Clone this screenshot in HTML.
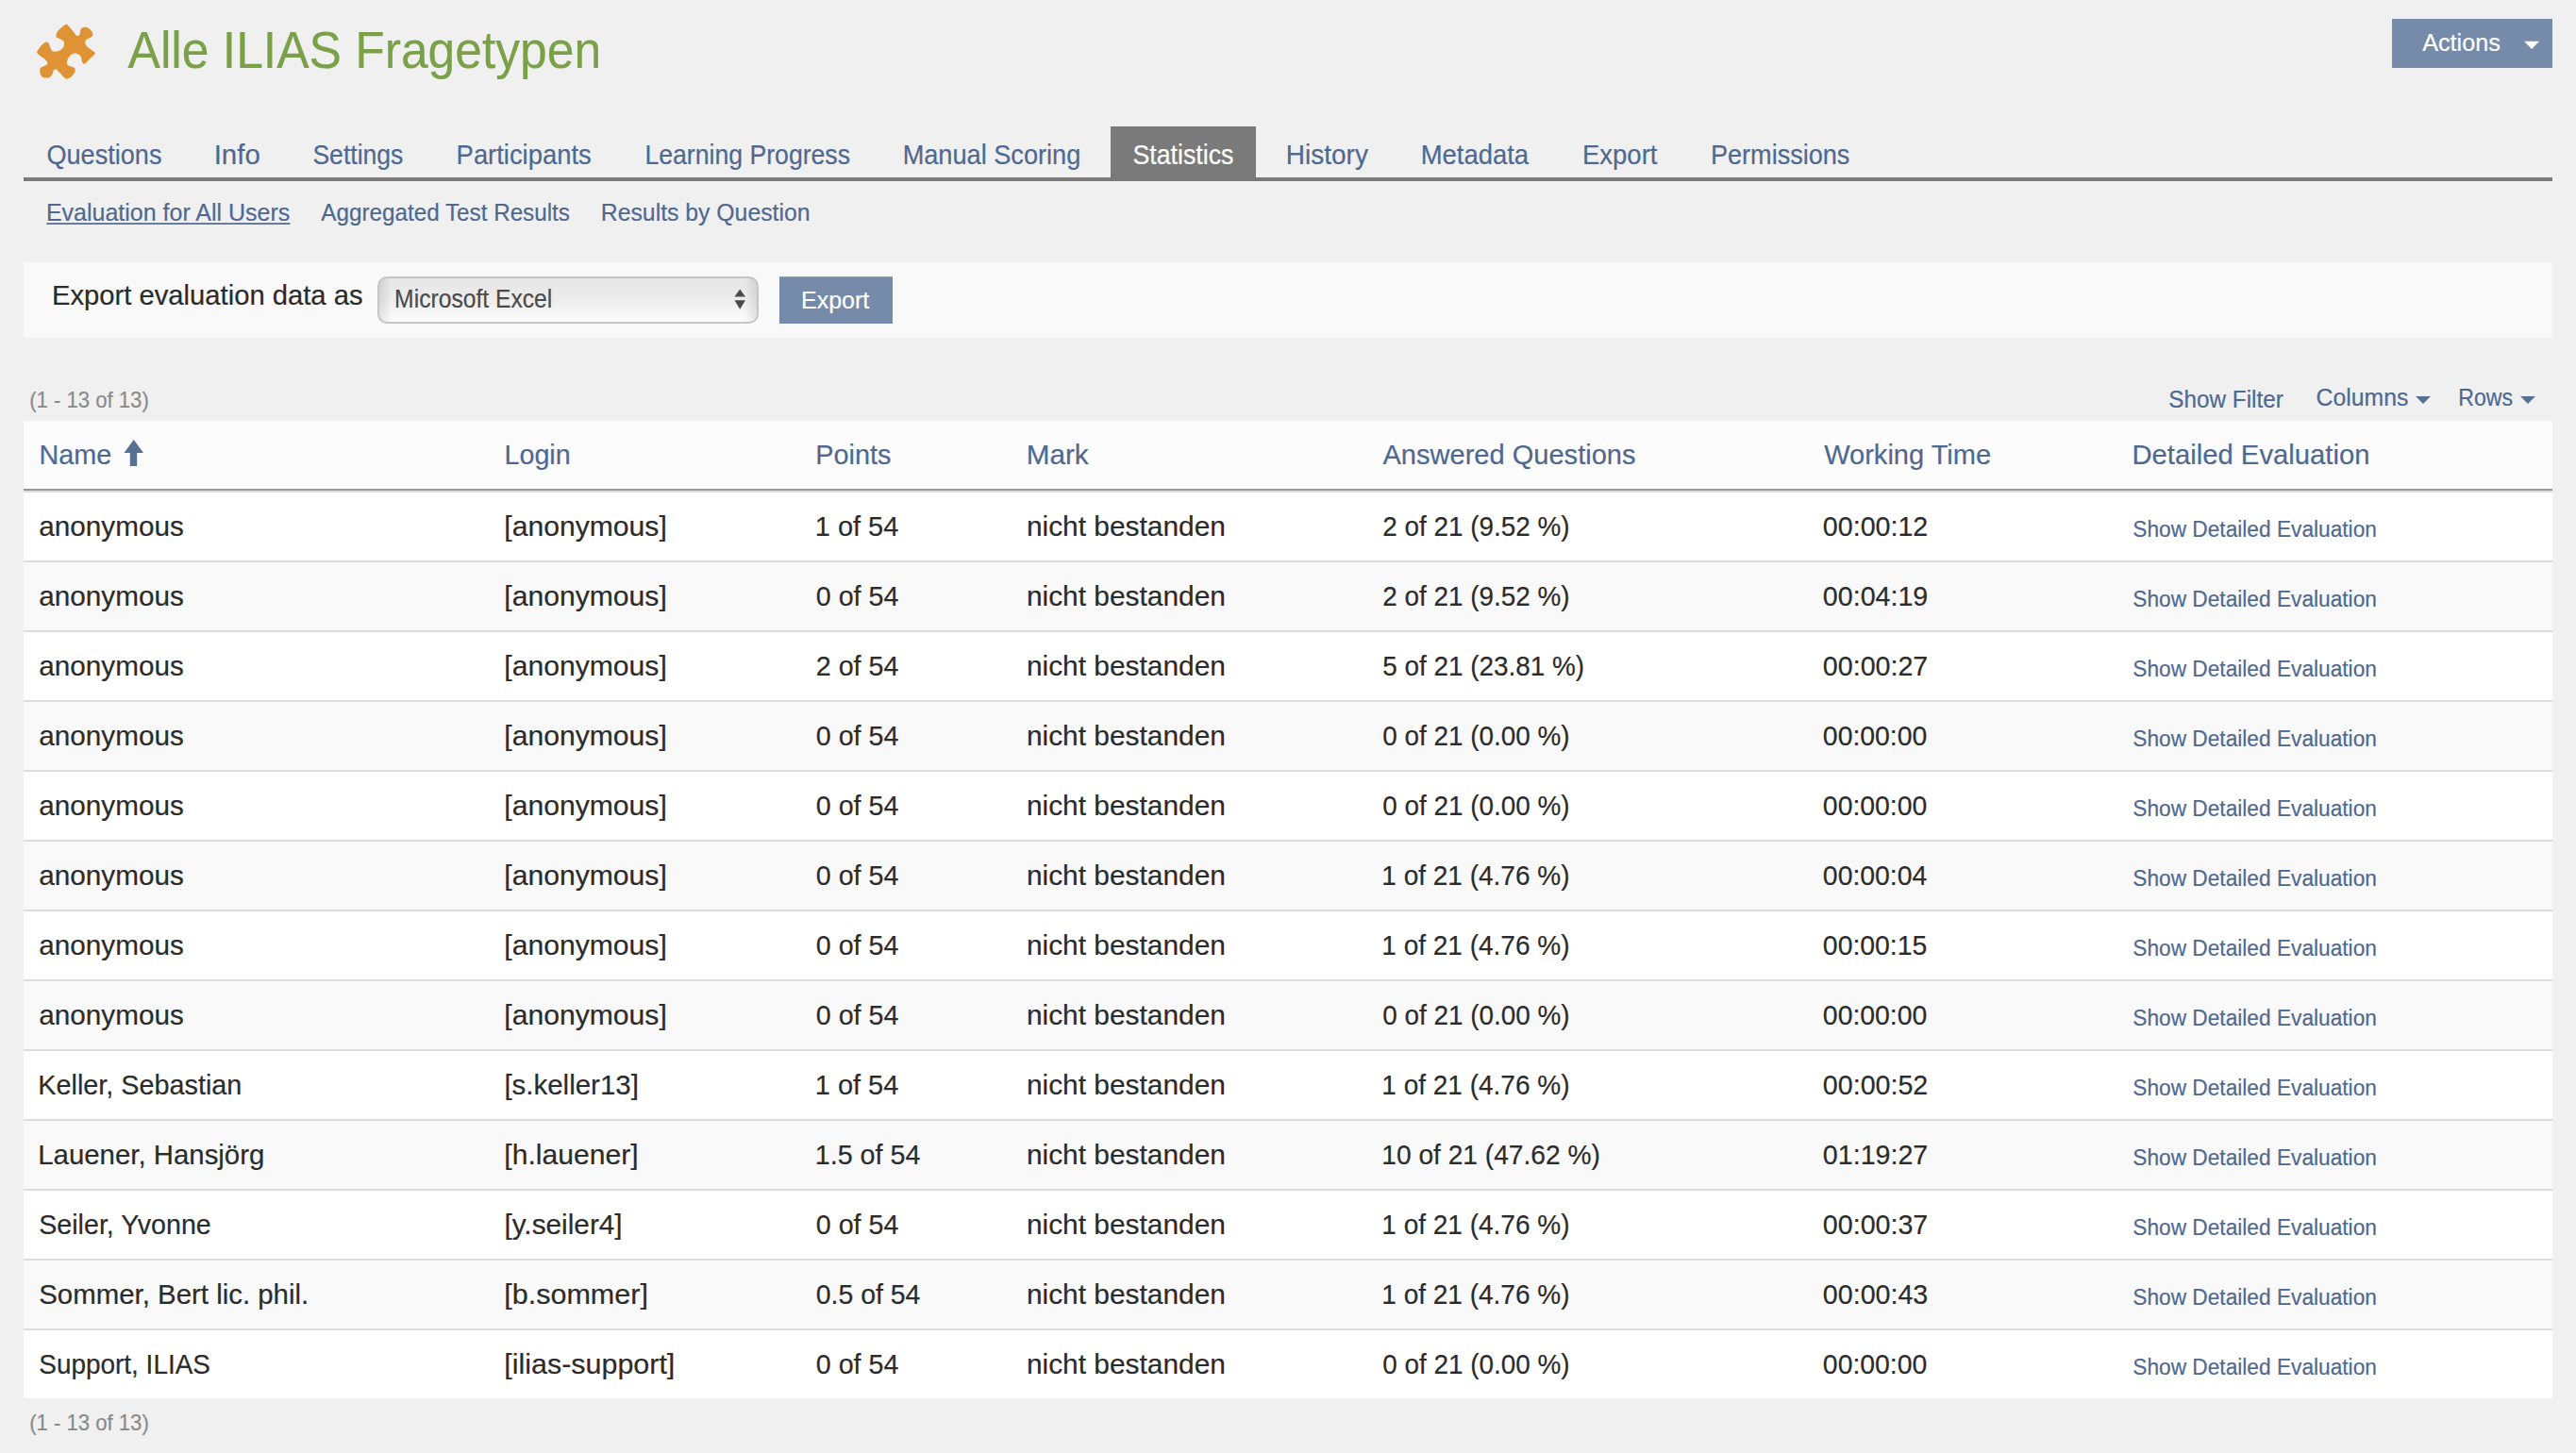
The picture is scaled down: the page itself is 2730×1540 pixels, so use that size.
<!DOCTYPE html>
<html><head><meta charset="utf-8"><title>Alle ILIAS Fragetypen - Statistics</title>
<style>html,body{margin:0;padding:0;background:#f0f0f0;overflow:hidden}svg{display:block}text{font-family:"Liberation Sans",sans-serif}</style>
</head><body><svg width="2730" height="1540" viewBox="0 0 2730 1540"><path d="M69.50,26.00 C70.95,25.43 70.95,25.87 72.40,27.20 C73.85,28.53 76.83,32.32 78.20,34.00 C79.57,35.68 79.88,36.62 80.60,37.30 C81.32,37.98 81.87,38.25 82.50,38.10 C83.13,37.95 83.83,37.65 84.40,36.40 C84.97,35.15 85.10,31.88 85.90,30.60 C86.70,29.32 87.83,28.78 89.20,28.70 C90.57,28.62 92.65,29.13 94.10,30.10 C95.55,31.07 97.27,33.13 97.90,34.50 C98.53,35.87 98.38,37.35 97.90,38.30 C97.42,39.25 96.03,39.63 95.00,40.20 C93.97,40.77 92.50,40.90 91.70,41.70 C90.90,42.50 90.13,43.80 90.20,45.00 C90.27,46.20 90.58,47.30 92.10,48.90 C93.62,50.50 97.88,53.42 99.30,54.60 C100.72,55.78 100.38,55.57 100.60,56.00 C100.82,56.43 100.82,56.77 100.60,57.20 C100.38,57.63 101.00,56.93 99.30,58.60 C97.60,60.27 92.07,65.68 90.40,67.20 C88.73,68.72 89.65,67.70 89.30,67.70 C88.95,67.70 88.72,67.60 88.30,67.20 C87.88,66.80 87.20,66.42 86.80,65.30 C86.40,64.18 86.53,61.78 85.90,60.50 C85.27,59.22 84.13,58.25 83.00,57.60 C81.87,56.95 80.38,56.52 79.10,56.60 C77.82,56.68 76.50,57.13 75.30,58.10 C74.10,59.07 72.63,61.05 71.90,62.40 C71.17,63.75 70.82,65.00 70.90,66.20 C70.98,67.40 71.18,68.72 72.40,69.60 C73.62,70.48 77.00,70.85 78.20,71.50 C79.40,72.15 79.45,72.62 79.60,73.50 C79.75,74.38 79.82,75.43 79.10,76.80 C78.38,78.17 76.73,80.57 75.30,81.70 C73.87,82.83 71.63,83.45 70.50,83.60 C69.37,83.75 70.12,84.13 68.50,82.60 C66.88,81.07 62.48,75.92 60.80,74.40 C59.12,72.88 59.12,73.42 58.40,73.50 C57.68,73.58 56.98,74.02 56.50,74.90 C56.02,75.78 56.07,77.67 55.50,78.80 C54.93,79.93 54.13,81.07 53.10,81.70 C52.07,82.33 50.67,82.60 49.30,82.60 C47.93,82.60 46.03,82.58 44.90,81.70 C43.77,80.82 42.90,78.75 42.50,77.30 C42.10,75.85 42.17,74.03 42.50,73.00 C42.83,71.97 43.37,71.82 44.50,71.10 C45.63,70.38 48.35,69.52 49.30,68.70 C50.25,67.88 50.37,67.08 50.20,66.20 C50.03,65.32 49.82,64.75 48.30,63.40 C46.78,62.05 42.62,59.40 41.10,58.10 C39.58,56.80 39.37,56.42 39.20,55.60 C39.03,54.78 39.22,54.55 40.10,53.20 C40.98,51.85 42.97,48.93 44.50,47.50 C46.03,46.07 48.10,44.85 49.30,44.60 C50.50,44.35 51.07,45.12 51.70,46.00 C52.33,46.88 52.55,48.62 53.10,49.90 C53.65,51.18 54.12,52.90 55.00,53.70 C55.88,54.50 56.95,54.78 58.40,54.70 C59.85,54.62 62.17,54.17 63.70,53.20 C65.23,52.23 66.95,50.42 67.60,48.90 C68.25,47.38 67.93,45.22 67.60,44.10 C67.27,42.98 66.82,42.93 65.60,42.20 C64.38,41.47 61.33,40.43 60.30,39.70 C59.27,38.97 59.32,38.83 59.40,37.80 C59.48,36.77 60.08,34.70 60.80,33.50 C61.52,32.30 62.25,31.85 63.70,30.60 C65.15,29.35 68.05,26.57 69.50,26.00Z" fill="#e09334"/><rect x="2535" y="20" width="170" height="52" fill="#768aaa"/><path d="M2675,43.8 L2691.1,43.8 L2683.05,52 Z" fill="#fff"/><rect x="25" y="188" width="2680" height="4" fill="#7a7a7a"/><rect x="1177" y="134" width="154" height="58" fill="#7a7a7a"/><rect x="49.3" y="236.2" width="258.2" height="1.7" fill="#4f6890"/><rect x="25" y="278" width="2680" height="80" fill="#f9f9f9"/><defs><linearGradient id="sg" x1="0" y1="0" x2="0" y2="1"><stop offset="0" stop-color="#e6e6e6"/><stop offset="0.45" stop-color="#ececec"/><stop offset="1" stop-color="#fdfdfd"/></linearGradient><linearGradient id="sh" x1="0" y1="0" x2="1" y2="0"><stop offset="0" stop-color="#000" stop-opacity="0.10"/><stop offset="0.035" stop-color="#000" stop-opacity="0"/><stop offset="0.965" stop-color="#000" stop-opacity="0"/><stop offset="1" stop-color="#000" stop-opacity="0.10"/></linearGradient></defs><rect x="401" y="294" width="402" height="48" rx="9" ry="9" fill="url(#sg)"/><rect x="401" y="294" width="402" height="48" rx="9" ry="9" fill="url(#sh)"/><rect x="401" y="294" width="402" height="48" rx="9" ry="9" fill="none" stroke="#c6c6c6" stroke-width="2"/><path d="M778.4,314.4 L790,314.4 L784.2,306.5 Z M778.4,318.2 L790,318.2 L784.2,327.7 Z" fill="#4a4a4a"/><rect x="826" y="293.2" width="120" height="49.8" fill="#768aaa"/><path d="M2560,420 L2576,420 L2568,428 Z" fill="#5a7092"/><path d="M2671,420 L2687,420 L2679,428 Z" fill="#5a7092"/><rect x="25" y="446" width="2680" height="72" fill="#fcfcfc"/><rect x="25" y="518" width="2680" height="2" fill="#999999"/><rect x="25" y="520" width="2680" height="2" fill="#dcdcdc"/><rect x="25" y="522" width="2680" height="72" fill="#ffffff"/><rect x="25" y="594" width="2680" height="2" fill="#dcdcdc"/><rect x="25" y="596" width="2680" height="72" fill="#f9f9f9"/><rect x="25" y="668" width="2680" height="2" fill="#dcdcdc"/><rect x="25" y="670" width="2680" height="72" fill="#ffffff"/><rect x="25" y="742" width="2680" height="2" fill="#dcdcdc"/><rect x="25" y="744" width="2680" height="72" fill="#f9f9f9"/><rect x="25" y="816" width="2680" height="2" fill="#dcdcdc"/><rect x="25" y="818" width="2680" height="72" fill="#ffffff"/><rect x="25" y="890" width="2680" height="2" fill="#dcdcdc"/><rect x="25" y="892" width="2680" height="72" fill="#f9f9f9"/><rect x="25" y="964" width="2680" height="2" fill="#dcdcdc"/><rect x="25" y="966" width="2680" height="72" fill="#ffffff"/><rect x="25" y="1038" width="2680" height="2" fill="#dcdcdc"/><rect x="25" y="1040" width="2680" height="72" fill="#f9f9f9"/><rect x="25" y="1112" width="2680" height="2" fill="#dcdcdc"/><rect x="25" y="1114" width="2680" height="72" fill="#ffffff"/><rect x="25" y="1186" width="2680" height="2" fill="#dcdcdc"/><rect x="25" y="1188" width="2680" height="72" fill="#f9f9f9"/><rect x="25" y="1260" width="2680" height="2" fill="#dcdcdc"/><rect x="25" y="1262" width="2680" height="72" fill="#ffffff"/><rect x="25" y="1334" width="2680" height="2" fill="#dcdcdc"/><rect x="25" y="1336" width="2680" height="72" fill="#f9f9f9"/><rect x="25" y="1408" width="2680" height="2" fill="#dcdcdc"/><rect x="25" y="1410" width="2680" height="72" fill="#ffffff"/><path d="M131.5,480 L141.75,466 L152,480 L145.2,480 L145.2,494 L137.8,494 L137.8,480 Z" fill="#5a7092"/><text x="135.50" y="72.00" font-size="55" fill="#7aa048" stroke="#7aa048" stroke-width="0.2" textLength="501.63" lengthAdjust="spacingAndGlyphs">Alle ILIAS Fragetypen</text><text x="2567.20" y="54.10" font-size="26.2" fill="#ffffff" stroke="#ffffff" stroke-width="0.2" textLength="82.56" lengthAdjust="spacingAndGlyphs">Actions</text><text x="49.47" y="174.40" font-size="29" fill="#4f6890" stroke="#4f6890" stroke-width="0.2" textLength="121.97" lengthAdjust="spacingAndGlyphs">Questions</text><text x="226.65" y="174.40" font-size="29" fill="#4f6890" stroke="#4f6890" stroke-width="0.2" textLength="49.14" lengthAdjust="spacingAndGlyphs">Info</text><text x="331.38" y="174.40" font-size="29" fill="#4f6890" stroke="#4f6890" stroke-width="0.2" textLength="96.05" lengthAdjust="spacingAndGlyphs">Settings</text><text x="483.61" y="174.40" font-size="29" fill="#4f6890" stroke="#4f6890" stroke-width="0.2" textLength="143.08" lengthAdjust="spacingAndGlyphs">Participants</text><text x="683.46" y="174.40" font-size="29" fill="#4f6890" stroke="#4f6890" stroke-width="0.2" textLength="217.54" lengthAdjust="spacingAndGlyphs">Learning Progress</text><text x="956.63" y="174.40" font-size="29" fill="#4f6890" stroke="#4f6890" stroke-width="0.2" textLength="188.68" lengthAdjust="spacingAndGlyphs">Manual Scoring</text><text x="1362.87" y="174.40" font-size="29" fill="#4f6890" stroke="#4f6890" stroke-width="0.2" textLength="87.06" lengthAdjust="spacingAndGlyphs">History</text><text x="1505.71" y="174.40" font-size="29" fill="#4f6890" stroke="#4f6890" stroke-width="0.2" textLength="114.32" lengthAdjust="spacingAndGlyphs">Metadata</text><text x="1677.00" y="174.40" font-size="29" fill="#4f6890" stroke="#4f6890" stroke-width="0.2" textLength="79.43" lengthAdjust="spacingAndGlyphs">Export</text><text x="1813.03" y="174.40" font-size="29" fill="#4f6890" stroke="#4f6890" stroke-width="0.2" textLength="147.34" lengthAdjust="spacingAndGlyphs">Permissions</text><text x="1200.38" y="174.40" font-size="29" fill="#ffffff" stroke="#ffffff" stroke-width="0.2" textLength="107.07" lengthAdjust="spacingAndGlyphs">Statistics</text><text x="48.93" y="233.90" font-size="26.7" fill="#4f6890" stroke="#4f6890" stroke-width="0.2" textLength="258.42" lengthAdjust="spacingAndGlyphs">Evaluation for All Users</text><text x="340.30" y="233.90" font-size="26.7" fill="#4f6890" stroke="#4f6890" stroke-width="0.2" textLength="263.66" lengthAdjust="spacingAndGlyphs">Aggregated Test Results</text><text x="636.84" y="233.90" font-size="26.7" fill="#4f6890" stroke="#4f6890" stroke-width="0.2" textLength="221.65" lengthAdjust="spacingAndGlyphs">Results by Question</text><text x="55.02" y="322.80" font-size="29.5" fill="#2b2b2b" stroke="#2b2b2b" stroke-width="0.2" textLength="329.49" lengthAdjust="spacingAndGlyphs">Export evaluation data as</text><text x="418.11" y="326.40" font-size="27.5" fill="#4a4a4a" stroke="#4a4a4a" stroke-width="0.2" textLength="167.18" lengthAdjust="spacingAndGlyphs">Microsoft Excel</text><text x="849.04" y="326.60" font-size="25.5" fill="#ffffff" stroke="#ffffff" stroke-width="0.2" textLength="72.17" lengthAdjust="spacingAndGlyphs">Export</text><text x="31.18" y="432.10" font-size="24" fill="#8a8a8a" stroke="#8a8a8a" stroke-width="0.2" textLength="126.62" lengthAdjust="spacingAndGlyphs">(1 - 13 of 13)</text><text x="31.18" y="1515.70" font-size="24" fill="#8a8a8a" stroke="#8a8a8a" stroke-width="0.2" textLength="126.62" lengthAdjust="spacingAndGlyphs">(1 - 13 of 13)</text><text x="2298.36" y="431.70" font-size="25.7" fill="#4f6890" stroke="#4f6890" stroke-width="0.2" textLength="121.40" lengthAdjust="spacingAndGlyphs">Show Filter</text><text x="2454.53" y="430.00" font-size="25.7" fill="#4f6890" stroke="#4f6890" stroke-width="0.2" textLength="97.81" lengthAdjust="spacingAndGlyphs">Columns</text><text x="2605.30" y="430.00" font-size="25.7" fill="#4f6890" stroke="#4f6890" stroke-width="0.2" textLength="57.71" lengthAdjust="spacingAndGlyphs">Rows</text><text x="41.58" y="492.00" font-size="30" fill="#4f6890" stroke="#4f6890" stroke-width="0.2" textLength="76.71" lengthAdjust="spacingAndGlyphs">Name</text><text x="534.49" y="492.00" font-size="30" fill="#4f6890" stroke="#4f6890" stroke-width="0.2" textLength="70.16" lengthAdjust="spacingAndGlyphs">Login</text><text x="864.28" y="492.00" font-size="30" fill="#4f6890" stroke="#4f6890" stroke-width="0.2" textLength="80.10" lengthAdjust="spacingAndGlyphs">Points</text><text x="1087.72" y="492.00" font-size="30" fill="#4f6890" stroke="#4f6890" stroke-width="0.2" textLength="65.95" lengthAdjust="spacingAndGlyphs">Mark</text><text x="1465.50" y="492.00" font-size="30" fill="#4f6890" stroke="#4f6890" stroke-width="0.2" textLength="267.99" lengthAdjust="spacingAndGlyphs">Answered Questions</text><text x="1933.20" y="492.00" font-size="30" fill="#4f6890" stroke="#4f6890" stroke-width="0.2" textLength="176.90" lengthAdjust="spacingAndGlyphs">Working Time</text><text x="2259.45" y="492.00" font-size="30" fill="#4f6890" stroke="#4f6890" stroke-width="0.2" textLength="252.03" lengthAdjust="spacingAndGlyphs">Detailed Evaluation</text><text x="41.21" y="568.00" font-size="30" fill="#2b2b2b" stroke="#2b2b2b" stroke-width="0.2" textLength="153.59" lengthAdjust="spacingAndGlyphs">anonymous</text><text x="534.39" y="568.00" font-size="30" fill="#2b2b2b" stroke="#2b2b2b" stroke-width="0.2" textLength="172.39" lengthAdjust="spacingAndGlyphs">[anonymous]</text><text x="863.77" y="568.00" font-size="30" fill="#2b2b2b" stroke="#2b2b2b" stroke-width="0.2" textLength="88.55" lengthAdjust="spacingAndGlyphs">1 of 54</text><text x="1087.91" y="568.00" font-size="30" fill="#2b2b2b" stroke="#2b2b2b" stroke-width="0.2" textLength="211.03" lengthAdjust="spacingAndGlyphs">nicht bestanden</text><text x="1465.27" y="568.00" font-size="30" fill="#2b2b2b" stroke="#2b2b2b" stroke-width="0.2" textLength="198.19" lengthAdjust="spacingAndGlyphs">2 of 21 (9.52 %)</text><text x="1931.85" y="568.00" font-size="30" fill="#2b2b2b" stroke="#2b2b2b" stroke-width="0.2" textLength="111.45" lengthAdjust="spacingAndGlyphs">00:00:12</text><text x="2260.28" y="568.50" font-size="24.7" fill="#4f6890" stroke="#4f6890" stroke-width="0.2" textLength="258.65" lengthAdjust="spacingAndGlyphs">Show Detailed Evaluation</text><text x="41.21" y="642.00" font-size="30" fill="#2b2b2b" stroke="#2b2b2b" stroke-width="0.2" textLength="153.59" lengthAdjust="spacingAndGlyphs">anonymous</text><text x="534.39" y="642.00" font-size="30" fill="#2b2b2b" stroke="#2b2b2b" stroke-width="0.2" textLength="172.39" lengthAdjust="spacingAndGlyphs">[anonymous]</text><text x="864.75" y="642.00" font-size="30" fill="#2b2b2b" stroke="#2b2b2b" stroke-width="0.2" textLength="87.57" lengthAdjust="spacingAndGlyphs">0 of 54</text><text x="1087.91" y="642.00" font-size="30" fill="#2b2b2b" stroke="#2b2b2b" stroke-width="0.2" textLength="211.03" lengthAdjust="spacingAndGlyphs">nicht bestanden</text><text x="1465.27" y="642.00" font-size="30" fill="#2b2b2b" stroke="#2b2b2b" stroke-width="0.2" textLength="198.19" lengthAdjust="spacingAndGlyphs">2 of 21 (9.52 %)</text><text x="1931.85" y="642.00" font-size="30" fill="#2b2b2b" stroke="#2b2b2b" stroke-width="0.2" textLength="111.45" lengthAdjust="spacingAndGlyphs">00:04:19</text><text x="2260.28" y="642.50" font-size="24.7" fill="#4f6890" stroke="#4f6890" stroke-width="0.2" textLength="258.65" lengthAdjust="spacingAndGlyphs">Show Detailed Evaluation</text><text x="41.21" y="716.00" font-size="30" fill="#2b2b2b" stroke="#2b2b2b" stroke-width="0.2" textLength="153.59" lengthAdjust="spacingAndGlyphs">anonymous</text><text x="534.39" y="716.00" font-size="30" fill="#2b2b2b" stroke="#2b2b2b" stroke-width="0.2" textLength="172.39" lengthAdjust="spacingAndGlyphs">[anonymous]</text><text x="864.75" y="716.00" font-size="30" fill="#2b2b2b" stroke="#2b2b2b" stroke-width="0.2" textLength="87.57" lengthAdjust="spacingAndGlyphs">2 of 54</text><text x="1087.91" y="716.00" font-size="30" fill="#2b2b2b" stroke="#2b2b2b" stroke-width="0.2" textLength="211.03" lengthAdjust="spacingAndGlyphs">nicht bestanden</text><text x="1465.27" y="716.00" font-size="30" fill="#2b2b2b" stroke="#2b2b2b" stroke-width="0.2" textLength="213.90" lengthAdjust="spacingAndGlyphs">5 of 21 (23.81 %)</text><text x="1931.85" y="716.00" font-size="30" fill="#2b2b2b" stroke="#2b2b2b" stroke-width="0.2" textLength="111.45" lengthAdjust="spacingAndGlyphs">00:00:27</text><text x="2260.28" y="716.50" font-size="24.7" fill="#4f6890" stroke="#4f6890" stroke-width="0.2" textLength="258.65" lengthAdjust="spacingAndGlyphs">Show Detailed Evaluation</text><text x="41.21" y="790.00" font-size="30" fill="#2b2b2b" stroke="#2b2b2b" stroke-width="0.2" textLength="153.59" lengthAdjust="spacingAndGlyphs">anonymous</text><text x="534.39" y="790.00" font-size="30" fill="#2b2b2b" stroke="#2b2b2b" stroke-width="0.2" textLength="172.39" lengthAdjust="spacingAndGlyphs">[anonymous]</text><text x="864.75" y="790.00" font-size="30" fill="#2b2b2b" stroke="#2b2b2b" stroke-width="0.2" textLength="87.57" lengthAdjust="spacingAndGlyphs">0 of 54</text><text x="1087.91" y="790.00" font-size="30" fill="#2b2b2b" stroke="#2b2b2b" stroke-width="0.2" textLength="211.03" lengthAdjust="spacingAndGlyphs">nicht bestanden</text><text x="1465.27" y="790.00" font-size="30" fill="#2b2b2b" stroke="#2b2b2b" stroke-width="0.2" textLength="198.19" lengthAdjust="spacingAndGlyphs">0 of 21 (0.00 %)</text><text x="1931.85" y="790.00" font-size="30" fill="#2b2b2b" stroke="#2b2b2b" stroke-width="0.2" textLength="110.49" lengthAdjust="spacingAndGlyphs">00:00:00</text><text x="2260.28" y="790.50" font-size="24.7" fill="#4f6890" stroke="#4f6890" stroke-width="0.2" textLength="258.65" lengthAdjust="spacingAndGlyphs">Show Detailed Evaluation</text><text x="41.21" y="864.00" font-size="30" fill="#2b2b2b" stroke="#2b2b2b" stroke-width="0.2" textLength="153.59" lengthAdjust="spacingAndGlyphs">anonymous</text><text x="534.39" y="864.00" font-size="30" fill="#2b2b2b" stroke="#2b2b2b" stroke-width="0.2" textLength="172.39" lengthAdjust="spacingAndGlyphs">[anonymous]</text><text x="864.75" y="864.00" font-size="30" fill="#2b2b2b" stroke="#2b2b2b" stroke-width="0.2" textLength="87.57" lengthAdjust="spacingAndGlyphs">0 of 54</text><text x="1087.91" y="864.00" font-size="30" fill="#2b2b2b" stroke="#2b2b2b" stroke-width="0.2" textLength="211.03" lengthAdjust="spacingAndGlyphs">nicht bestanden</text><text x="1465.27" y="864.00" font-size="30" fill="#2b2b2b" stroke="#2b2b2b" stroke-width="0.2" textLength="198.19" lengthAdjust="spacingAndGlyphs">0 of 21 (0.00 %)</text><text x="1931.85" y="864.00" font-size="30" fill="#2b2b2b" stroke="#2b2b2b" stroke-width="0.2" textLength="110.49" lengthAdjust="spacingAndGlyphs">00:00:00</text><text x="2260.28" y="864.50" font-size="24.7" fill="#4f6890" stroke="#4f6890" stroke-width="0.2" textLength="258.65" lengthAdjust="spacingAndGlyphs">Show Detailed Evaluation</text><text x="41.21" y="938.00" font-size="30" fill="#2b2b2b" stroke="#2b2b2b" stroke-width="0.2" textLength="153.59" lengthAdjust="spacingAndGlyphs">anonymous</text><text x="534.39" y="938.00" font-size="30" fill="#2b2b2b" stroke="#2b2b2b" stroke-width="0.2" textLength="172.39" lengthAdjust="spacingAndGlyphs">[anonymous]</text><text x="864.75" y="938.00" font-size="30" fill="#2b2b2b" stroke="#2b2b2b" stroke-width="0.2" textLength="87.57" lengthAdjust="spacingAndGlyphs">0 of 54</text><text x="1087.91" y="938.00" font-size="30" fill="#2b2b2b" stroke="#2b2b2b" stroke-width="0.2" textLength="211.03" lengthAdjust="spacingAndGlyphs">nicht bestanden</text><text x="1464.33" y="938.00" font-size="30" fill="#2b2b2b" stroke="#2b2b2b" stroke-width="0.2" textLength="199.14" lengthAdjust="spacingAndGlyphs">1 of 21 (4.76 %)</text><text x="1931.85" y="938.00" font-size="30" fill="#2b2b2b" stroke="#2b2b2b" stroke-width="0.2" textLength="110.49" lengthAdjust="spacingAndGlyphs">00:00:04</text><text x="2260.28" y="938.50" font-size="24.7" fill="#4f6890" stroke="#4f6890" stroke-width="0.2" textLength="258.65" lengthAdjust="spacingAndGlyphs">Show Detailed Evaluation</text><text x="41.21" y="1012.00" font-size="30" fill="#2b2b2b" stroke="#2b2b2b" stroke-width="0.2" textLength="153.59" lengthAdjust="spacingAndGlyphs">anonymous</text><text x="534.39" y="1012.00" font-size="30" fill="#2b2b2b" stroke="#2b2b2b" stroke-width="0.2" textLength="172.39" lengthAdjust="spacingAndGlyphs">[anonymous]</text><text x="864.75" y="1012.00" font-size="30" fill="#2b2b2b" stroke="#2b2b2b" stroke-width="0.2" textLength="87.57" lengthAdjust="spacingAndGlyphs">0 of 54</text><text x="1087.91" y="1012.00" font-size="30" fill="#2b2b2b" stroke="#2b2b2b" stroke-width="0.2" textLength="211.03" lengthAdjust="spacingAndGlyphs">nicht bestanden</text><text x="1464.33" y="1012.00" font-size="30" fill="#2b2b2b" stroke="#2b2b2b" stroke-width="0.2" textLength="199.14" lengthAdjust="spacingAndGlyphs">1 of 21 (4.76 %)</text><text x="1931.85" y="1012.00" font-size="30" fill="#2b2b2b" stroke="#2b2b2b" stroke-width="0.2" textLength="110.49" lengthAdjust="spacingAndGlyphs">00:00:15</text><text x="2260.28" y="1012.50" font-size="24.7" fill="#4f6890" stroke="#4f6890" stroke-width="0.2" textLength="258.65" lengthAdjust="spacingAndGlyphs">Show Detailed Evaluation</text><text x="41.21" y="1086.00" font-size="30" fill="#2b2b2b" stroke="#2b2b2b" stroke-width="0.2" textLength="153.59" lengthAdjust="spacingAndGlyphs">anonymous</text><text x="534.39" y="1086.00" font-size="30" fill="#2b2b2b" stroke="#2b2b2b" stroke-width="0.2" textLength="172.39" lengthAdjust="spacingAndGlyphs">[anonymous]</text><text x="864.75" y="1086.00" font-size="30" fill="#2b2b2b" stroke="#2b2b2b" stroke-width="0.2" textLength="87.57" lengthAdjust="spacingAndGlyphs">0 of 54</text><text x="1087.91" y="1086.00" font-size="30" fill="#2b2b2b" stroke="#2b2b2b" stroke-width="0.2" textLength="211.03" lengthAdjust="spacingAndGlyphs">nicht bestanden</text><text x="1465.27" y="1086.00" font-size="30" fill="#2b2b2b" stroke="#2b2b2b" stroke-width="0.2" textLength="198.19" lengthAdjust="spacingAndGlyphs">0 of 21 (0.00 %)</text><text x="1931.85" y="1086.00" font-size="30" fill="#2b2b2b" stroke="#2b2b2b" stroke-width="0.2" textLength="110.49" lengthAdjust="spacingAndGlyphs">00:00:00</text><text x="2260.28" y="1086.50" font-size="24.7" fill="#4f6890" stroke="#4f6890" stroke-width="0.2" textLength="258.65" lengthAdjust="spacingAndGlyphs">Show Detailed Evaluation</text><text x="40.28" y="1160.00" font-size="30" fill="#2b2b2b" stroke="#2b2b2b" stroke-width="0.2" textLength="216.09" lengthAdjust="spacingAndGlyphs">Keller, Sebastian</text><text x="534.44" y="1160.00" font-size="30" fill="#2b2b2b" stroke="#2b2b2b" stroke-width="0.2" textLength="142.40" lengthAdjust="spacingAndGlyphs">[s.keller13]</text><text x="863.77" y="1160.00" font-size="30" fill="#2b2b2b" stroke="#2b2b2b" stroke-width="0.2" textLength="88.55" lengthAdjust="spacingAndGlyphs">1 of 54</text><text x="1087.91" y="1160.00" font-size="30" fill="#2b2b2b" stroke="#2b2b2b" stroke-width="0.2" textLength="211.03" lengthAdjust="spacingAndGlyphs">nicht bestanden</text><text x="1464.33" y="1160.00" font-size="30" fill="#2b2b2b" stroke="#2b2b2b" stroke-width="0.2" textLength="199.14" lengthAdjust="spacingAndGlyphs">1 of 21 (4.76 %)</text><text x="1931.85" y="1160.00" font-size="30" fill="#2b2b2b" stroke="#2b2b2b" stroke-width="0.2" textLength="111.45" lengthAdjust="spacingAndGlyphs">00:00:52</text><text x="2260.28" y="1160.50" font-size="24.7" fill="#4f6890" stroke="#4f6890" stroke-width="0.2" textLength="258.65" lengthAdjust="spacingAndGlyphs">Show Detailed Evaluation</text><text x="40.24" y="1234.00" font-size="30" fill="#2b2b2b" stroke="#2b2b2b" stroke-width="0.2" textLength="240.09" lengthAdjust="spacingAndGlyphs">Lauener, Hansjörg</text><text x="534.39" y="1234.00" font-size="30" fill="#2b2b2b" stroke="#2b2b2b" stroke-width="0.2" textLength="142.19" lengthAdjust="spacingAndGlyphs">[h.lauener]</text><text x="863.79" y="1234.00" font-size="30" fill="#2b2b2b" stroke="#2b2b2b" stroke-width="0.2" textLength="111.64" lengthAdjust="spacingAndGlyphs">1.5 of 54</text><text x="1087.91" y="1234.00" font-size="30" fill="#2b2b2b" stroke="#2b2b2b" stroke-width="0.2" textLength="211.03" lengthAdjust="spacingAndGlyphs">nicht bestanden</text><text x="1464.32" y="1234.00" font-size="30" fill="#2b2b2b" stroke="#2b2b2b" stroke-width="0.2" textLength="231.49" lengthAdjust="spacingAndGlyphs">10 of 21 (47.62 %)</text><text x="1931.85" y="1234.00" font-size="30" fill="#2b2b2b" stroke="#2b2b2b" stroke-width="0.2" textLength="111.45" lengthAdjust="spacingAndGlyphs">01:19:27</text><text x="2260.28" y="1234.50" font-size="24.7" fill="#4f6890" stroke="#4f6890" stroke-width="0.2" textLength="258.65" lengthAdjust="spacingAndGlyphs">Show Detailed Evaluation</text><text x="41.25" y="1308.00" font-size="30" fill="#2b2b2b" stroke="#2b2b2b" stroke-width="0.2" textLength="182.46" lengthAdjust="spacingAndGlyphs">Seiler, Yvonne</text><text x="534.41" y="1308.00" font-size="30" fill="#2b2b2b" stroke="#2b2b2b" stroke-width="0.2" textLength="125.23" lengthAdjust="spacingAndGlyphs">[y.seiler4]</text><text x="864.75" y="1308.00" font-size="30" fill="#2b2b2b" stroke="#2b2b2b" stroke-width="0.2" textLength="87.57" lengthAdjust="spacingAndGlyphs">0 of 54</text><text x="1087.91" y="1308.00" font-size="30" fill="#2b2b2b" stroke="#2b2b2b" stroke-width="0.2" textLength="211.03" lengthAdjust="spacingAndGlyphs">nicht bestanden</text><text x="1464.33" y="1308.00" font-size="30" fill="#2b2b2b" stroke="#2b2b2b" stroke-width="0.2" textLength="199.14" lengthAdjust="spacingAndGlyphs">1 of 21 (4.76 %)</text><text x="1931.85" y="1308.00" font-size="30" fill="#2b2b2b" stroke="#2b2b2b" stroke-width="0.2" textLength="111.45" lengthAdjust="spacingAndGlyphs">00:00:37</text><text x="2260.28" y="1308.50" font-size="24.7" fill="#4f6890" stroke="#4f6890" stroke-width="0.2" textLength="258.65" lengthAdjust="spacingAndGlyphs">Show Detailed Evaluation</text><text x="41.22" y="1382.00" font-size="30" fill="#2b2b2b" stroke="#2b2b2b" stroke-width="0.2" textLength="285.99" lengthAdjust="spacingAndGlyphs">Sommer, Bert lic. phil.</text><text x="534.37" y="1382.00" font-size="30" fill="#2b2b2b" stroke="#2b2b2b" stroke-width="0.2" textLength="152.50" lengthAdjust="spacingAndGlyphs">[b.sommer]</text><text x="864.75" y="1382.00" font-size="30" fill="#2b2b2b" stroke="#2b2b2b" stroke-width="0.2" textLength="110.67" lengthAdjust="spacingAndGlyphs">0.5 of 54</text><text x="1087.91" y="1382.00" font-size="30" fill="#2b2b2b" stroke="#2b2b2b" stroke-width="0.2" textLength="211.03" lengthAdjust="spacingAndGlyphs">nicht bestanden</text><text x="1464.33" y="1382.00" font-size="30" fill="#2b2b2b" stroke="#2b2b2b" stroke-width="0.2" textLength="199.14" lengthAdjust="spacingAndGlyphs">1 of 21 (4.76 %)</text><text x="1931.85" y="1382.00" font-size="30" fill="#2b2b2b" stroke="#2b2b2b" stroke-width="0.2" textLength="111.45" lengthAdjust="spacingAndGlyphs">00:00:43</text><text x="2260.28" y="1382.50" font-size="24.7" fill="#4f6890" stroke="#4f6890" stroke-width="0.2" textLength="258.65" lengthAdjust="spacingAndGlyphs">Show Detailed Evaluation</text><text x="41.27" y="1456.00" font-size="30" fill="#2b2b2b" stroke="#2b2b2b" stroke-width="0.2" textLength="181.68" lengthAdjust="spacingAndGlyphs">Support, ILIAS</text><text x="534.37" y="1456.00" font-size="30" fill="#2b2b2b" stroke="#2b2b2b" stroke-width="0.2" textLength="180.97" lengthAdjust="spacingAndGlyphs">[ilias-support]</text><text x="864.75" y="1456.00" font-size="30" fill="#2b2b2b" stroke="#2b2b2b" stroke-width="0.2" textLength="87.57" lengthAdjust="spacingAndGlyphs">0 of 54</text><text x="1087.91" y="1456.00" font-size="30" fill="#2b2b2b" stroke="#2b2b2b" stroke-width="0.2" textLength="211.03" lengthAdjust="spacingAndGlyphs">nicht bestanden</text><text x="1465.27" y="1456.00" font-size="30" fill="#2b2b2b" stroke="#2b2b2b" stroke-width="0.2" textLength="198.19" lengthAdjust="spacingAndGlyphs">0 of 21 (0.00 %)</text><text x="1931.85" y="1456.00" font-size="30" fill="#2b2b2b" stroke="#2b2b2b" stroke-width="0.2" textLength="110.49" lengthAdjust="spacingAndGlyphs">00:00:00</text><text x="2260.28" y="1456.50" font-size="24.7" fill="#4f6890" stroke="#4f6890" stroke-width="0.2" textLength="258.65" lengthAdjust="spacingAndGlyphs">Show Detailed Evaluation</text></svg></body></html>
